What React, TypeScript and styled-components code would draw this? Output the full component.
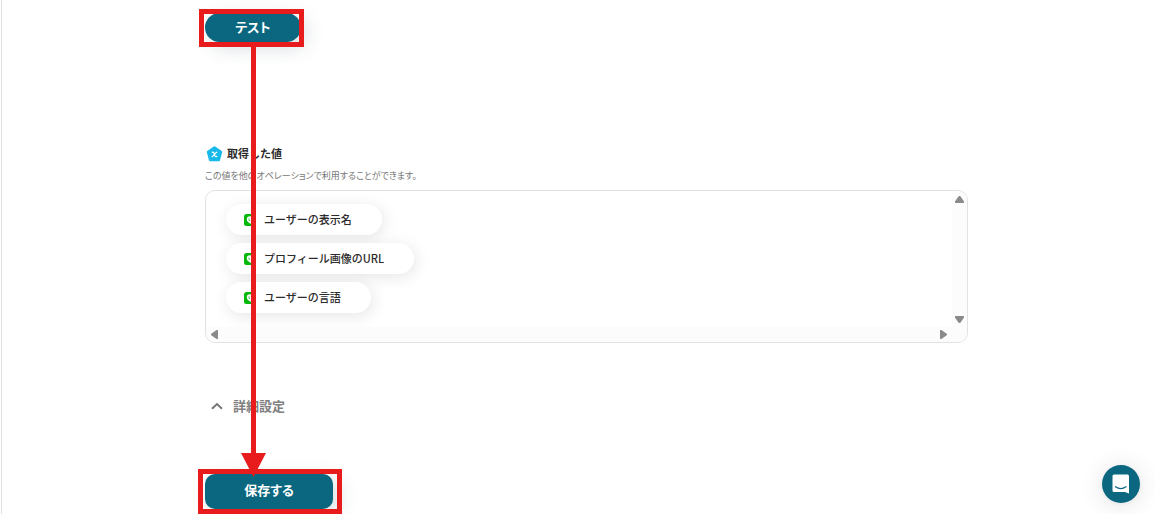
import React from "react";
import styled, { createGlobalStyle } from "styled-components";

const TEAL = "#0b6780";
const RED = "#e81c1c";

const GlobalStyle = createGlobalStyle`
  *, *::before, *::after { box-sizing: border-box; }
  body {
    margin: 0;
    background: #fff;
    color: #2b2b2b;
    font-family: "Noto Sans CJK JP", "Noto Sans", sans-serif;
  }
`;

const Page = styled.main`
  margin-left: 1px;
  min-height: 100vh;
  border-left: 1px solid #e2e2e2;
  padding: 13px 187px 5px 203px;
`;

const Button = styled.button<{ $pill?: boolean }>`
  display: block;
  min-width: ${(p) => (p.$pill ? 96 : 128)}px;
  height: ${(p) => (p.$pill ? 29 : 35)}px;
  padding: 0 0 ${(p) => (p.$pill ? 1 : 3)}px;
  border: 0;
  border-radius: ${(p) => (p.$pill ? 15 : 10)}px;
  background: ${TEAL};
  color: #fff;
  font: inherit;
  font-feature-settings: "palt";
  font-size: 13px;
  font-weight: 700;
  line-height: 20px;
  box-shadow: 5px 5px 20px rgba(20, 60, 70, 0.18);
  cursor: pointer;
`;

const Marked = styled.div<{ $test?: boolean }>`
  position: relative;
  width: max-content;

  &::after {
    content: "";
    position: absolute;
    z-index: 2;
    inset: ${(p) => (p.$test ? "-4px -3px -5px -6px" : "-5px -9px -5px -7px")};
    border: 5px solid ${RED};
    pointer-events: none;
  }
`;

const Arrow = styled.svg`
  position: absolute;
  z-index: 3;
  top: 33px;
  left: 36px;
  pointer-events: none;
`;

const Values = styled.section`
  margin-top: 102px;
`;

const Title = styled.h2`
  display: flex;
  align-items: center;
  gap: 4px;
  margin: 0;
  height: 20px;
  padding-left: 1px;
  font-size: 11px;
  font-weight: 700;
  line-height: 20px;

  span { padding-bottom: 2px; }
`;

const Caption = styled.p`
  margin: 4px 0 6px;
  color: #777;
  font-size: 9px;
  font-feature-settings: "palt";
  line-height: 16px;
`;

const Panel = styled.div`
  display: grid;
  grid-template: 1fr 15px / 1fr 15px;
  height: 153px;
  border: 1px solid #e2e2e2;
  border-radius: 10px;
  overflow: hidden;
`;

const ChipList = styled.ul`
  display: flex;
  flex-direction: column;
  align-items: flex-start;
  gap: 8px;
  margin: 0;
  padding: 13px 20px;
  list-style: none;
  overflow: hidden;
`;

const Chip = styled.li`
  display: flex;
  align-items: center;
  gap: 8px;
  height: 31px;
  padding: 0 30px 0 18px;
  border-radius: 16px;
  background: #fff;
  box-shadow: 2px 3px 16px rgba(0, 0, 0, 0.1);
  font-size: 11px;
  font-weight: 500;
  line-height: 20px;

  span { padding-bottom: 2px; }
`;

const Track = styled.div<{ $vertical?: boolean }>`
  display: flex;
  flex-direction: ${(p) => (p.$vertical ? "column" : "row")};
  align-items: center;
  justify-content: space-between;
  padding: ${(p) => (p.$vertical ? "3px 0 2px" : "0 3px")};
  background: #fcfcfc;
`;

const Corner = styled.div`
  background: #fcfcfc;
`;

const ScrollButton = styled.button`
  display: block;
  width: 11px;
  height: 11px;
  padding: 0;
  border: 0;
  background: none;

  svg { display: block; }
`;

const Details = styled.button`
  display: flex;
  align-items: center;
  gap: 10px;
  height: 24px;
  margin: 51px 0 56px;
  padding: 0 0 0 6px;
  border: 0;
  background: none;
  color: #808080;
  font: inherit;
  font-size: 13px;
  font-weight: 700;
  line-height: 24px;
  cursor: pointer;
`;

const ChatButton = styled.button`
  position: fixed;
  right: 15px;
  bottom: 11px;
  display: grid;
  place-items: center;
  width: 38px;
  height: 38px;
  padding: 0;
  border: 0;
  border-radius: 50%;
  background: ${TEAL};
  box-shadow: 0 1px 5px rgba(0, 0, 0, 0.06), 0 2px 24px rgba(0, 0, 0, 0.12);
  cursor: pointer;
`;

const LineIcon = () => (
  <svg width="12" height="12" viewBox="0 0 12 12" aria-hidden="true">
    <rect width="12" height="12" rx="2.5" fill="#06b80b" />
    <path d="M6 2.2C4 2.2 2.8 2.9 2.8 5.3 2.8 7.6 4.3 8.7 5.7 8.9L5.9 10C8 9.2 9.3 7.6 9.3 5.3 9.3 3 8.1 2.2 6 2.2Z" fill="#fff" />
    <path d="M5 4.3V6.5H6M7.5 4.3V6.5" fill="none" stroke="#06b80b" strokeWidth="0.7" />
  </svg>
);

const VariableIcon = () => (
  <svg width="17" height="16" viewBox="0 0 17 16" aria-hidden="true">
    <path
      d="M8.5 1.4L15 6 12.9 14H4.1L2 6Z"
      fill="#17b9ea"
      stroke="#17b9ea"
      strokeWidth="2.4"
      strokeLinejoin="round"
    />
    <path
      d="M6.2 6.3C7.4 5.8 7.8 6.5 8.4 8.4 9 10.5 9.6 11 10.8 10.4M10.9 6.2C9.5 6.5 7.8 9.8 6.1 10.6"
      fill="none"
      stroke="#fff"
      strokeWidth="1.2"
      strokeLinecap="round"
    />
  </svg>
);

const TURN = { up: 0, right: 90, down: 180, left: 270 };

const ScrollArrow = ({ to, label }: { to: keyof typeof TURN; label: string }) => (
  <ScrollButton type="button" aria-label={label}>
    <svg width="11" height="11" viewBox="0 0 11 11" aria-hidden="true">
      <path
        d="M5.2 2.7H5.8L9.3 7.6V8.3H1.7V7.6Z"
        transform={`rotate(${TURN[to]} 5.5 5.5)`}
        fill="#8a8a8a"
        stroke="#8a8a8a"
        strokeWidth="1.4"
        strokeLinejoin="round"
      />
    </svg>
  </ScrollButton>
);

const values = ["ユーザーの表示名", "プロフィール画像のURL", "ユーザーの言語"];

export default function App() {
  return (
    <>
      <GlobalStyle />
      <Page>
        <Marked $test>
          <Button type="button" $pill>テスト</Button>
          <Arrow width="25" height="431" viewBox="0 0 25 431" aria-hidden="true">
            <path d="M10 0H15V407H25L12.5 431 0 407H10Z" fill={RED} />
          </Arrow>
        </Marked>

        <Values>
          <Title>
            <VariableIcon />
            <span>取得した値</span>
          </Title>
          <Caption>この値を他のオペレーションで利用することができます。</Caption>
          <Panel>
            <ChipList>
              {values.map((name) => (
                <Chip key={name}>
                  <LineIcon />
                  <span>{name}</span>
                </Chip>
              ))}
            </ChipList>
            <Track $vertical>
              <ScrollArrow to="up" label="上へスクロール" />
              <ScrollArrow to="down" label="下へスクロール" />
            </Track>
            <Track>
              <ScrollArrow to="left" label="左へスクロール" />
              <ScrollArrow to="right" label="右へスクロール" />
            </Track>
            <Corner />
          </Panel>
        </Values>

        <Details type="button" aria-expanded="true">
          <svg width="12" height="8" viewBox="0 0 12 8" aria-hidden="true">
            <path d="M1 6.7L6 2 11 6.7" fill="none" stroke="#777" strokeWidth="2" />
          </svg>
          詳細設定
        </Details>

        <Marked>
          <Button type="button">保存する</Button>
        </Marked>
      </Page>

      <ChatButton type="button" aria-label="チャットを開く">
        <svg width="18" height="20" viewBox="0 0 18 20" aria-hidden="true">
          <path d="M2 0.5H15.5Q17 0.5 17 2V19.5L13 18H2Q0.5 18 0.5 16.5V2Q0.5 0.5 2 0.5Z" fill="#fff" />
          <path d="M3.5 12.8Q8.8 16.4 14 12.8" fill="none" stroke={TEAL} strokeWidth="1.3" strokeLinecap="round" />
        </svg>
      </ChatButton>
    </>
  );
}
